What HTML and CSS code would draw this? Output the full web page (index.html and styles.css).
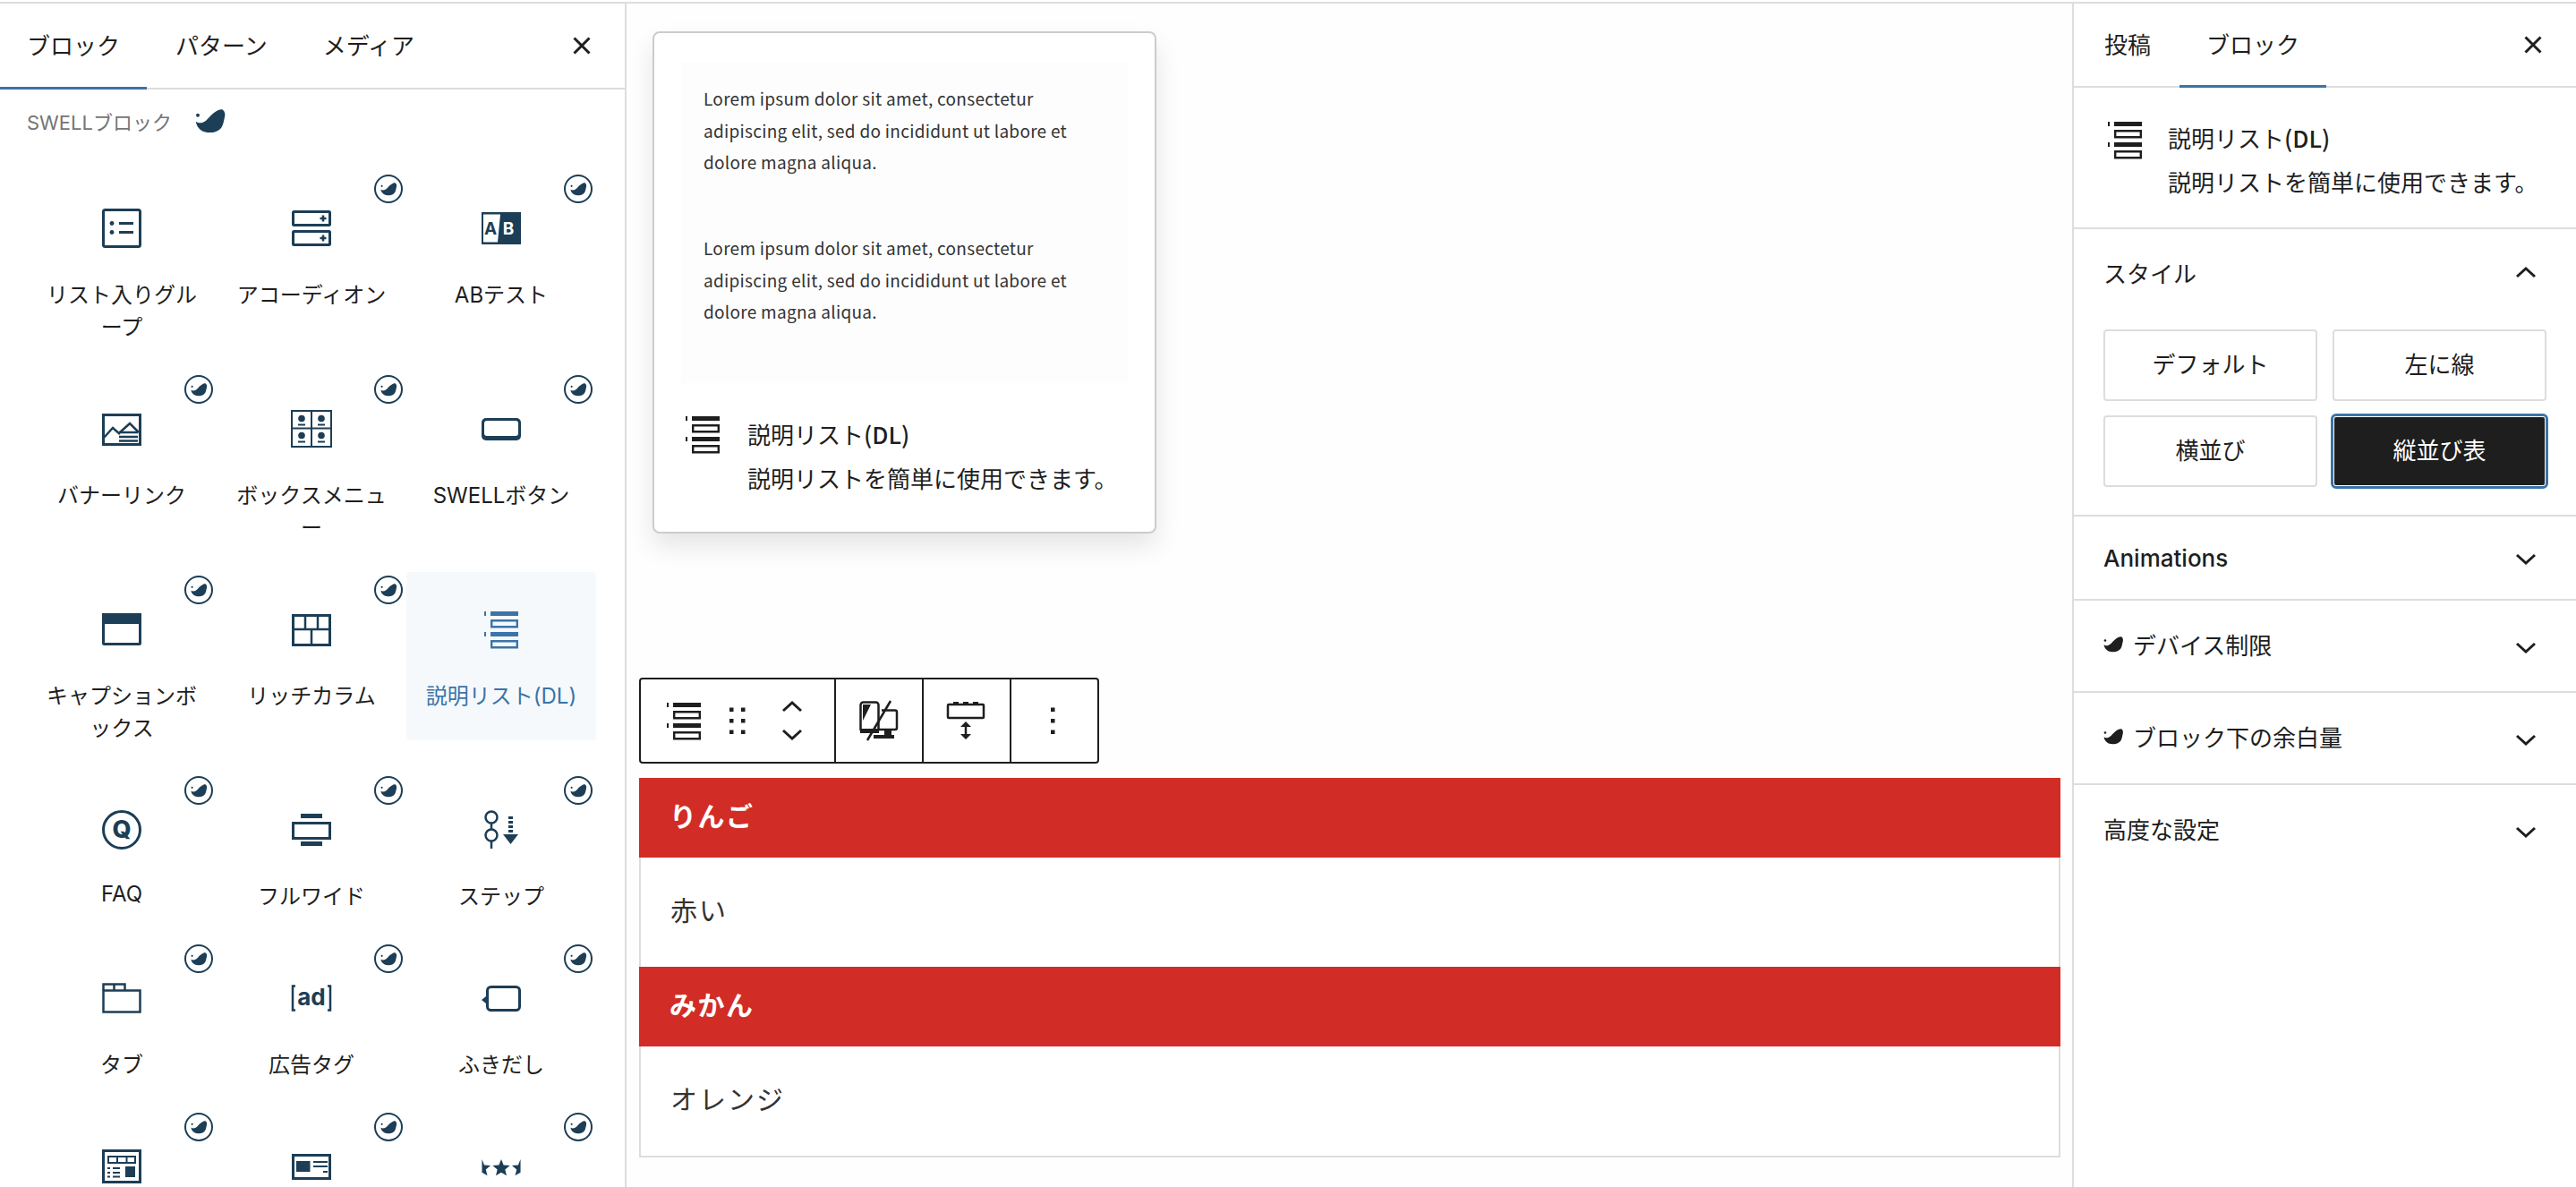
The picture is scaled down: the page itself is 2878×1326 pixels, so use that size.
FILE: index.html
```html
<!DOCTYPE html>
<html lang="ja">
<head>
<meta charset="utf-8">
<title>説明リスト(DL)</title>
<link rel="stylesheet" href="styles.css">
</head>
<body>
<svg class="defs" width="0" height="0">
  <symbol id="dl" viewBox="0 0 44 44">
    <path d="M3 2h2v5H3zM10 2h31v5H10zM3 25h2v5H3zM10 25h31v5H10z" fill="currentColor"/>
    <path d="M11.200 12.200h28.600v7H11.200zM11.200 35.200h28.600v7H11.200z" fill="none" stroke="currentColor" stroke-width="2.400"/>
  </symbol>
  <symbol id="swell" viewBox="0 0 35 27">
    <circle cx="3" cy="6.700" r="2" fill="currentColor"/>
    <path d="M1 13.700C3 15.500 6 15.500 8 15 11 14 14 11 16 8.700 19 5.500 23 2 26 1 28 .3 30 0 31 .7 33.500 2.500 33.800 6 33 8.700 32 13 31.500 17 29.700 20 26.500 24.500 21 26.500 16 26 11 26 6 24 4 21 2 18.500 1 16 1 13.700Z" fill="currentColor"/>
  </symbol>
  <symbol id="chev-down" viewBox="0 0 24 24">
    <path d="M2 7l10 9 10-9" fill="none" stroke="currentColor" stroke-width="3"/>
  </symbol>
  <symbol id="close" viewBox="0 0 24 24">
    <path d="M3.500 3.500l17 17M20.500 3.500l-17 17" fill="none" stroke="currentColor" stroke-width="3"/>
  </symbol>
</svg>
<div class="topline"></div>
<div class="app">
  <aside class="inserter">
    <div class="tabs">
      <div class="tab active">ブロック</div>
      <div class="tab">パターン</div>
      <div class="tab">メディア</div>
      <svg class="close"><use href="#close"/></svg>
    </div>
    <div class="cat"><span>SWELLブロック</span><svg class="cat-logo"><use href="#swell"/></svg></div>
    <div class="grid">
      <div class="cell">
        <svg class="ico" viewBox="0 0 44 44"><rect x="1.500" y="1.500" width="41" height="41" rx="2" class="s3"/><circle cx="11" cy="16.500" r="2.400" class="f"/><circle cx="11" cy="26.500" r="2.400" class="f"/><path d="M19 16.500h16M19 26.500h16" class="s3"/></svg>
        <div class="lbl">リスト入りグル<br>ープ</div>
      </div>
      <div class="cell">
        <svg class="badge"><use href="#swell" x="5" y="7" width="19" height="15"/></svg>
        <svg class="ico" viewBox="0 0 44 44"><rect x="1.500" y="3.500" width="41" height="15" rx="1" class="s3"/><rect x="1.500" y="25.500" width="41" height="15" rx="1" class="s3"/><path d="M31.500 11h7M35 7.500v7M31.500 33h7M35 29.500v7" class="s25"/></svg>
        <div class="lbl">アコーディオン</div>
      </div>
      <div class="cell">
        <svg class="badge"><use href="#swell" x="5" y="7" width="19" height="15"/></svg>
        <svg class="ico" viewBox="0 0 44 44"><rect y="4" width="44" height="36" class="f"/><path d="M2 6.500h19l-3 31H2z" fill="#fff"/><text x="10" y="28.500" class="t-ab t-navy">A</text><text x="30" y="28.500" class="t-ab t-white">B</text></svg>
        <div class="lbl">ABテスト</div>
      </div>

      <div class="cell">
        <svg class="badge"><use href="#swell" x="5" y="7" width="19" height="15"/></svg>
        <svg class="ico" viewBox="0 0 44 44"><rect x="1.500" y="6.500" width="41" height="33" class="s3"/><path d="M2 32l10-11 8 7M20 26L31 16l10 10" class="s25"/><path d="M19 26h21M19 31h21M19 35.500h21" class="s25"/></svg>
        <div class="lbl">バナーリンク</div>
      </div>
      <div class="cell">
        <svg class="badge"><use href="#swell" x="5" y="7" width="19" height="15"/></svg>
        <svg class="ico" viewBox="0 0 44 44"><rect x="0" y="2" width="44" height="40" class="s2"/><path d="M22 2v40M0 21.500h44M7 17.500h8M29 17.500h8M7 36.500h8M29 36.500h8" class="s2"/><circle cx="11" cy="10.500" r="3.800" class="f"/><circle cx="33" cy="10.500" r="3.800" class="f"/><circle cx="11" cy="29.500" r="3.800" class="f"/><circle cx="33" cy="29.500" r="3.800" class="f"/></svg>
        <div class="lbl">ボックスメニュ<br>ー</div>
      </div>
      <div class="cell">
        <svg class="badge"><use href="#swell" x="5" y="7" width="19" height="15"/></svg>
        <svg class="ico" viewBox="0 0 44 44"><rect x="0" y="10" width="44" height="25" rx="5" class="f"/><rect x="3" y="13" width="38" height="17" rx="3" fill="#fff"/></svg>
        <div class="lbl">SWELLボタン</div>
      </div>

      <div class="cell">
        <svg class="badge"><use href="#swell" x="5" y="7" width="19" height="15"/></svg>
        <svg class="ico" viewBox="0 0 44 44"><rect x="1.500" y="5.500" width="41" height="33" rx="1" class="s3"/><rect x="0" y="4" width="44" height="12" class="f"/></svg>
        <div class="lbl">キャプションボ<br>ックス</div>
      </div>
      <div class="cell">
        <svg class="badge"><use href="#swell" x="5" y="7" width="19" height="15"/></svg>
        <svg class="ico" viewBox="0 0 44 44"><rect x="1.500" y="6.500" width="41" height="33" class="s3"/><path d="M1.500 22h41M15 6.500V22M29 6.500V22M22 22v17.500" class="s25"/></svg>
        <div class="lbl">リッチカラム</div>
      </div>
      <div class="cell sel">
        <svg class="ico"><use href="#dl"/></svg>
        <div class="lbl">説明リスト(DL)</div>
      </div>

      <div class="cell">
        <svg class="badge"><use href="#swell" x="5" y="7" width="19" height="15"/></svg>
        <svg class="ico" viewBox="0 0 44 44"><circle cx="22" cy="22" r="20.500" class="s3"/><text x="22" y="31" class="t-q t-navy">Q</text></svg>
        <div class="lbl lbl-latin">FAQ</div>
      </div>
      <div class="cell">
        <svg class="badge"><use href="#swell" x="5" y="7" width="19" height="15"/></svg>
        <svg class="ico" viewBox="0 0 44 44"><rect x="1.500" y="14.500" width="41" height="17" class="s3"/><rect x="10" y="4" width="24" height="5" class="f"/><rect x="10" y="35" width="24" height="5" class="f"/></svg>
        <div class="lbl">フルワイド</div>
      </div>
      <div class="cell">
        <svg class="badge"><use href="#swell" x="5" y="7" width="19" height="15"/></svg>
        <svg class="ico" viewBox="0 0 44 44"><circle cx="11" cy="8" r="6.500" class="s25"/><circle cx="11" cy="28" r="6.500" class="s25"/><path d="M11 14.500v7M11 34.500V43" class="s25"/><path d="M32.500 7v21" class="dash"/><path d="M24 27h17l-8.500 11z" class="f"/></svg>
        <div class="lbl">ステップ</div>
      </div>

      <div class="cell">
        <svg class="badge"><use href="#swell" x="5" y="7" width="19" height="15"/></svg>
        <svg class="ico" viewBox="0 0 44 44"><rect x="1.500" y="13.500" width="41" height="24" class="s25"/><path d="M1.500 13.500v-7h24v7M13.500 6.500v7" class="s25"/></svg>
        <div class="lbl">タブ</div>
      </div>
      <div class="cell">
        <svg class="badge"><use href="#swell" x="5" y="7" width="19" height="15"/></svg>
        <svg class="ico" viewBox="0 0 44 44"><path d="M4 8.500h-3v27h3M40 8.500h3v27h-3" class="s25"/><text x="22" y="30" class="t-ad t-navy">ad</text></svg>
        <div class="lbl">広告タグ</div>
      </div>
      <div class="cell">
        <svg class="badge"><use href="#swell" x="5" y="7" width="19" height="15"/></svg>
        <svg class="ico" viewBox="0 0 44 44"><rect x="6.500" y="9.500" width="36" height="26" rx="4" class="s3"/><path d="M5 20l-5 4 5 4z" class="f"/></svg>
        <div class="lbl">ふきだし</div>
      </div>

      <div class="cell">
        <svg class="badge"><use href="#swell" x="5" y="7" width="19" height="15"/></svg>
        <svg class="ico" viewBox="0 0 44 44"><rect x="1.500" y="4.500" width="41" height="35" class="s3"/><rect x="7" y="11" width="30" height="7" class="s2"/><path d="M17 11v7M27.500 11v7M12 24h8M12 29h8M12 33.500h8" class="s2"/><rect x="6" y="23" width="3" height="2" class="f"/><rect x="6" y="28" width="3" height="2" class="f"/><rect x="6" y="32.500" width="3" height="2" class="f"/><rect x="26" y="22" width="11" height="12" class="f"/></svg>
      </div>
      <div class="cell">
        <svg class="badge"><use href="#swell" x="5" y="7" width="19" height="15"/></svg>
        <svg class="ico" viewBox="0 0 44 44"><rect x="1.500" y="9.500" width="41" height="26" class="s3"/><rect x="5" y="16" width="15.500" height="12" class="f"/><path d="M24 17h16M24 22h16M35 28h5" class="s2"/></svg>
      </div>
      <div class="cell">
        <svg class="badge"><use href="#swell" x="5" y="7" width="19" height="15"/></svg>
        <svg class="ico" viewBox="0 0 47 44"><path class="f" d="M23.500 13.500l2.800 6.900 7.500.6-5.700 4.800 1.800 7.200-6.400-3.900-6.400 3.900 1.800-7.200-5.700-4.800 7.500-.6zM.5 13.500l2.800 6.900 7.500.6-5.700 4.800 1.800 7.200-6.400-3.900zM46.500 13.500v15.600l-6.400 3.900 1.800-7.200-5.700-4.800 7.500-.6z"/></svg>
      </div>
    </div>
  </aside>

  <main class="canvas">
    <div class="card">
      <div class="preview">
        <p class="lorem">Lorem ipsum dolor sit amet, consectetur<br>adipiscing elit, sed do incididunt ut labore et<br>dolore magna aliqua.</p>
        <p class="lorem">Lorem ipsum dolor sit amet, consectetur<br>adipiscing elit, sed do incididunt ut labore et<br>dolore magna aliqua.</p>
      </div>
      <div class="info info-card">
        <svg class="ico-dark"><use href="#dl"/></svg>
        <div class="info-text">
          <div class="info-title">説明リスト<b>(DL)</b></div>
          <div class="info-desc">説明リストを簡単に使用できます。</div>
        </div>
      </div>
    </div>

    <div class="toolbar">
      <div class="tb-seg tb-first">
        <svg class="tb-dl"><use href="#dl"/></svg>
        <svg class="tb-drag" viewBox="0 0 18 30"><path d="M0 .5h4.500v4.500H0zM13 .5h4.500v4.500H13zM0 13h4.500v4.500H0zM13 13h4.500v4.500H13zM0 25.500h4.500V30H0zM13 25.500h4.500V30H13z"/></svg>
        <svg class="tb-mover" viewBox="0 0 24 44"><path d="M2 11l10-9 10 9M2 33l10 9 10-9" fill="none" stroke="#1e1e1e" stroke-width="3"/></svg>
      </div>
      <div class="tb-seg">
        <svg class="tb-ico" viewBox="0 0 48 48"><rect x="3.500" y="3.500" width="20" height="33" rx="3" fill="none" stroke="#1e1e1e" stroke-width="2.500"/><path d="M6 6h9L6 24zM3 33h21v5H3z" fill="#1e1e1e"/><path d="M27 12.500h15a2 2 0 0 1 2 2V32a2 2 0 0 1-2 2H24" fill="none" stroke="#1e1e1e" stroke-width="2.500"/><path d="M30 34h8v6h-8zM18 40h23v4H18z" fill="#1e1e1e"/><path d="M37 2L11 46" stroke="#1e1e1e" stroke-width="2.500"/></svg>
      </div>
      <div class="tb-seg">
        <svg class="tb-ico" viewBox="0 0 48 48"><rect x="3" y="6" width="40" height="15" rx="1" fill="none" stroke="#1e1e1e" stroke-width="2.500"/><path d="M9 3h6v4H9zM20 3h6v4h-6zM31 3h6v4h-6z" fill="#1e1e1e"/><path d="M23 28v14" stroke="#1e1e1e" stroke-width="2.500"/><path d="M23 25l6 6H17zM23 45l-6-6h12z" fill="#1e1e1e"/></svg>
      </div>
      <div class="tb-seg">
        <svg class="tb-kebab" viewBox="0 0 5 30"><path d="M0 .5h4.500v4.500H0zM0 13h4.500v4.500H0zM0 25.500h4.500V30H0z"/></svg>
      </div>
    </div>

    <div class="dl">
      <div class="dt">りんご</div>
      <div class="dd">赤い</div>
      <div class="dt">みかん</div>
      <div class="dd">オレンジ</div>
    </div>
  </main>

  <aside class="settings">
    <div class="tabs tabs-s">
      <div class="tab">投稿</div>
      <div class="tab active">ブロック</div>
      <svg class="close"><use href="#close"/></svg>
    </div>
    <div class="info info-side">
      <svg class="ico-dark"><use href="#dl"/></svg>
      <div class="info-text">
        <div class="info-title">説明リスト<b>(DL)</b></div>
        <div class="info-desc">説明リストを簡単に使用できます。</div>
      </div>
    </div>
    <section class="panel panel-style">
      <div class="panel-head head-style"><span>スタイル</span><svg class="chev up"><use href="#chev-down"/></svg></div>
      <div class="styles">
        <div class="sbtn">デフォルト</div>
        <div class="sbtn">左に線</div>
        <div class="sbtn">横並び</div>
        <div class="sbtn on">縦並び表</div>
      </div>
    </section>
    <section class="panel"><div class="panel-head h92"><span class="anim">Animations</span><svg class="chev"><use href="#chev-down"/></svg></div></section>
    <section class="panel"><div class="panel-head"><span class="with-logo"><svg class="mini"><use href="#swell"/></svg>デバイス制限</span><svg class="chev"><use href="#chev-down"/></svg></div></section>
    <section class="panel"><div class="panel-head"><span class="with-logo"><svg class="mini"><use href="#swell"/></svg>ブロック下の余白量</span><svg class="chev"><use href="#chev-down"/></svg></div></section>
    <section class="panel last"><div class="panel-head"><span>高度な設定</span><svg class="chev"><use href="#chev-down"/></svg></div></section>
  </aside>
</div>
</body>
</html>
```

FILE: styles.css
```css
* { box-sizing: border-box; }
html, body { margin: 0; padding: 0; }
body {
  width: 2878px;
  height: 1326px;
  overflow: hidden;
  background: #fff;
  color: #1e1e1e;
  font-family: "Inter", "Noto Sans CJK JP", sans-serif;
  font-size: 26px;
}
.defs { display: block; height: 0; }
.topline { height: 4px; border-bottom: 2px solid #ddd; }
.app { display: flex; height: 1322px; overflow: hidden; }

/* tabs */
.tabs { display: flex; align-items: center; gap: 2px; height: 96px; border-bottom: 2px solid #ddd; padding-right: 36px; }
.tabs-s { height: 94px; padding-left: 4px; }
.tab { position: relative; display: flex; align-items: center; height: 100%; padding: 0 30px 4px; font-size: 26px; font-family: "Noto Sans CJK JP", sans-serif; }
.tab.active::after { content: ""; position: absolute; left: 0; right: 0; bottom: -2px; height: 3px; background: #3a74a8; }
.close { width: 24px; height: 24px; margin-left: auto; color: #1e1e1e; }

/* inserter */
.inserter { width: 700px; flex: none; border-right: 2px solid #ddd; overflow: hidden; }
.cat { display: flex; align-items: center; height: 70px; padding-left: 30px; color: #757575; font-size: 22px; }
.cat-logo { width: 35px; height: 27px; margin-left: 26px; color: #1c3e56; }
.grid { display: grid; grid-template-columns: repeat(3, 212px); align-items: start; padding-left: 30px; margin-top: 21px; }
.cell { position: relative; padding: 42px 0 31px; text-align: center; color: #1e1e1e; }
.cell.sel { background: #f5f9fc; border-radius: 4px; color: #3a74a8; }
.ico { display: block; width: 44px; height: 44px; margin: 0 auto 35px; color: #1c3e56; overflow: visible; }
.sel .ico { color: #3a74a8; }
.lbl { line-height: 36px; font-size: 24px; }
.lbl-latin { position: relative; top: -3px; }
.badge { position: absolute; top: 4px; right: 4px; width: 32px; height: 32px; border: 2.500px solid #1c3e56; border-radius: 50%; background: #fff; color: #1c3e56; }
.f { fill: #1c3e56; }
.s2, .s25, .s3, .dash { fill: none; stroke: #1c3e56; }
.s2 { stroke-width: 2; }
.s25 { stroke-width: 2.500; }
.s3 { stroke-width: 3; }
.dash { stroke-width: 5; stroke-dasharray: 3 2; }
.t-ab, .t-q, .t-ad { font-family: "Inter", sans-serif; font-weight: 700; text-anchor: middle; }
.t-ab { font-size: 19px; }
.t-q { font-size: 27px; font-weight: 800; }
.t-ad { font-size: 26px; }
.t-navy { fill: #1c3e56; }
.t-white { fill: #fff; }

/* canvas */
.canvas { flex: none; width: 1615px; background: #fefefe; padding: 31px 13px 0 14px; overflow: hidden; }
.card { width: 563px; height: 561px; margin-left: 15px; padding: 32px 30px 0; background: #fff; border: 2px solid #ccc; border-radius: 8px; box-shadow: 0 14px 28px rgba(0,0,0,.1); }
.preview { height: 359px; padding: 23px 0 0 25px; background: #fdfdfd; }
.lorem { margin: 0 0 60.500px; font-family: "Noto Sans CJK JP", sans-serif; font-size: 19px; line-height: 35.500px; letter-spacing: .28px; color: #333; white-space: nowrap; }
.info { display: flex; color: #1e1e1e; }
.info-card { margin-top: 35px; padding-left: 2px; }
.info-side { height: 158px; padding: 36px 0 0 35px; border-bottom: 2px solid #ddd; }
.ico-dark { width: 44px; height: 44px; flex: none; color: #1e1e1e; }
.info-text { margin-left: 28px; padding-top: 4px; white-space: nowrap; font-family: "Noto Sans CJK JP", sans-serif; }
.info-side .info-text { margin-left: 26px; padding-top: 2px; }
.info-title, .info-desc { line-height: 36px; font-size: 26px; }
.info-title b { font-weight: 500; }
.info-desc { margin-top: 13px; }

.toolbar { display: flex; width: 514px; height: 96px; margin-top: 161px; background: #fff; border: 2px solid #1e1e1e; border-radius: 4px; }
.tb-seg { display: flex; align-items: center; justify-content: center; width: 98px; border-right: 2px solid #1e1e1e; flex: none; }
.tb-seg:last-child { border-right: 0; width: auto; flex: 1; padding-right: 4px; }
.tb-first { width: 218px; justify-content: flex-start; padding-left: 26px; }
.tb-dl { width: 44px; height: 44px; color: #1e1e1e; }
.tb-drag { width: 18px; height: 30px; margin-left: 29px; fill: #1e1e1e; }
.tb-mover { width: 24px; height: 44px; margin-left: 40px; }
.tb-ico { width: 48px; height: 48px; }
.tb-kebab { width: 5px; height: 30px; fill: #1e1e1e; }

.dl { margin-top: 16px; border: 2px solid #ddd; border-top: 0; }
.dt { height: 89px; margin: 0 -2px; padding: 0 0 7px 34px; display: flex; align-items: center; background: #d22c26; color: #fff; font-family: "Noto Sans CJK JP", sans-serif; font-weight: 700; font-size: 30px; letter-spacing: 1.500px; }
.dd { height: 122px; padding: 33px 0 0 33px; font-family: "Noto Sans CJK JP", sans-serif; font-size: 30px; line-height: 48px; letter-spacing: 2px; color: #333; background: #fff; }

/* settings */
.settings { flex: 1; min-width: 0; border-left: 2px solid #ddd; overflow: hidden; }
.panel { border-bottom: 2px solid #ddd; }
.panel.last { border-bottom: 0; }
.panel-head { display: flex; align-items: center; justify-content: space-between; height: 101px; padding: 0 44px 0 33px; font-family: "Noto Sans CJK JP", sans-serif; }
.panel-head > span { padding-bottom: 4px; }
.head-style { height: 100px; }
.h92 { height: 92px; }
.panel-style { padding-bottom: 31px; }
.chev { width: 24px; height: 24px; margin-top: 4px; color: #1e1e1e; }
.chev.up { transform: scaleY(-1); margin-top: -4px; }
.panel-head > .anim { font-family: "Inter", sans-serif; font-weight: 500; padding-bottom: 0; }
.with-logo { display: flex; align-items: center; }
.mini { width: 23px; height: 18px; margin-right: 10px; color: #1e1e1e; }
.styles { display: grid; grid-template-columns: 239px 239px; grid-auto-rows: 80px; gap: 16px 17px; margin: 12px 0 0 33px; }
.sbtn { display: flex; align-items: center; justify-content: center; padding-bottom: 5px; border: 2px solid #ddd; border-radius: 4px; background: #fff; font-family: "Noto Sans CJK JP", sans-serif; }
.sbtn.on { background: #1e1e1e; color: #fff; border-color: #fff; outline: 3px solid #3a74a8; outline-offset: -1px; }
```
